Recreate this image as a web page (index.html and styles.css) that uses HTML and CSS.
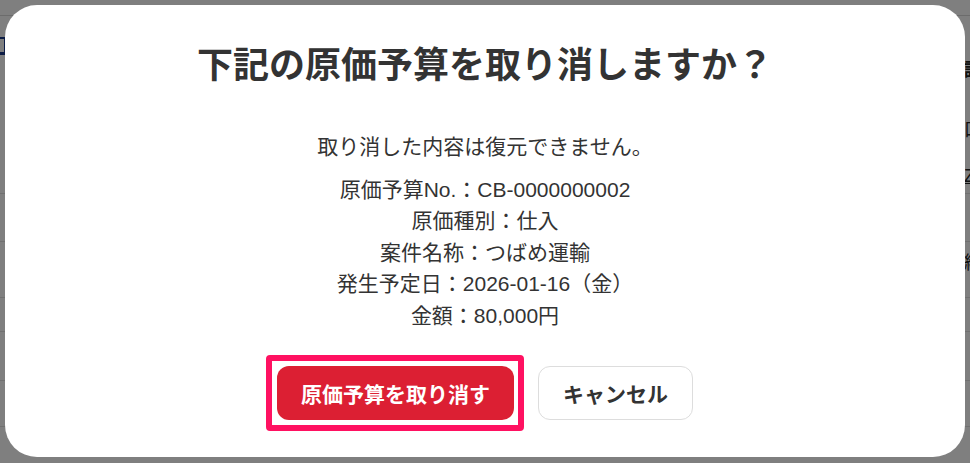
FILE: index.html
```html
<!DOCTYPE html>
<html lang="ja">
<head>
<meta charset="utf-8">
<title>原価予算の取り消し</title>
<link rel="stylesheet" href="styles.css">
</head>
<body>
<div class="page">
  <div class="page-top"></div>
  <div class="page-rows">
    <div class="row r1"><span class="icon-box"></span></div>
    <div class="row r2"></div>
    <div class="row r3"></div>
    <div class="row r4"></div>
    <div class="row r5"></div>
    <div class="row r6"></div>
  </div>
  <div class="side">
    <span class="sg g1">請</span>
    <span class="sg g2">口</span>
    <span class="sg g3">Z</span>
    <span class="sg g4">総</span>
  </div>
</div>
<div class="overlay">
  <div class="modal" role="dialog">
    <h1 class="modal-title">下記の原価予算を取り消しますか？</h1>
    <p class="modal-note">取り消した内容は復元できません。</p>
    <ul class="detail-list">
      <li>原価予算No.：CB-0000000002</li>
      <li>原価種別：仕入</li>
      <li>案件名称：つばめ運輸</li>
      <li>発生予定日：2026-01-16（金）</li>
      <li>金額：80,000円</li>
    </ul>
    <div class="actions">
      <button class="btn btn-danger highlighted">原価予算を取り消す</button>
      <button class="btn btn-cancel">キャンセル</button>
    </div>
  </div>
</div>
</body>
</html>
```
FILE: styles.css
```css
* { box-sizing: border-box; }
html, body { margin: 0; padding: 0; }
body {
  width: 970px;
  height: 463px;
  overflow: hidden;
  background: #ffffff;
  font-family: "Liberation Sans", "Noto Sans CJK JP", sans-serif;
  color: #333333;
  position: relative;
}
.page {
  position: relative;
  width: 970px;
  height: 463px;
}
.page-top {
  height: 16px;
  border-bottom: 1px solid #d8d8d8;
}
.page-rows {
  padding-top: 20px;
}
.row {
  position: relative;
  border-bottom: 1px solid #e0e0e0;
}
.r1 { height: 158px; }
.r2 { height: 48px; }
.r3 { height: 56px; }
.r4 { height: 34px; }
.r5 { height: 49px; }
.r6 { height: 46px; }
.icon-box {
  position: absolute;
  left: -8px;
  top: 1px;
  width: 14px;
  height: 18px;
  border: 2px solid #1a3a8c;
  border-bottom-width: 3px;
}
.side {
  position: absolute;
  left: 963px;
  top: 0;
  width: 7px;
  height: 463px;
  border-left: 1px solid transparent;
}
.sg {
  position: absolute;
  left: 0;
  font-size: 18px;
  line-height: 20px;
  color: #222;
}
.g1 { top: 60px; font-weight: bold; }
.g2 { top: 120px; }
.g3 { top: 166px; text-decoration: underline; }
.g4 { top: 253px; }

.overlay {
  position: absolute;
  inset: 0;
  background: rgba(0, 0, 0, 0.5);
  padding: 5px;
}
.modal {
  width: 960px;
  height: 452px;
  background: #ffffff;
  border-radius: 32px;
  padding-top: 37px;
  display: flex;
  flex-direction: column;
  align-items: center;
}
.modal-title {
  margin: 0;
  font-size: 36px;
  line-height: 48px;
  font-weight: bold;
  color: #333333;
  letter-spacing: 0;
}
.modal-note {
  margin: 41px 0 0;
  font-size: 21px;
  line-height: 31.5px;
  color: #333333;
}
.detail-list {
  list-style: none;
  margin: 11px 0 0;
  padding: 0;
  text-align: center;
  font-size: 21px;
  line-height: 31.6px;
  color: #333333;
}
.actions {
  margin-top: 35px;
  display: flex;
  gap: 24px;
}
.btn {
  height: 54px;
  border-radius: 12px;
  font-family: "Liberation Sans", "Noto Sans CJK JP", sans-serif;
  font-size: 21px;
  font-weight: bold;
  cursor: pointer;
}
.btn-danger {
  width: 237px;
  background: #dc1f33;
  color: #ffffff;
  border: none;
}
.btn-cancel {
  width: 155px;
  background: #ffffff;
  color: #333333;
  border: 1px solid #dddddd;
}
.highlighted {
  position: relative;
}
.highlighted::after {
  content: "";
  position: absolute;
  left: -11px;
  top: -11px;
  right: -10px;
  bottom: -11px;
  border: 6px solid #ff1161;
  border-radius: 4px;
  pointer-events: none;
}
```
